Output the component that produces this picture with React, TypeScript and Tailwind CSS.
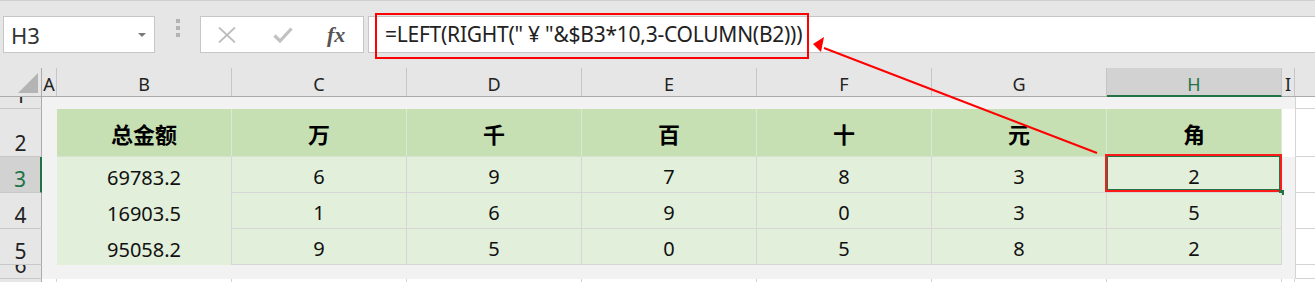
import React from "react";

const sans = "font-['Noto_Sans','Noto_Sans_CJK_SC',sans-serif]";
const cjk = "font-['Noto_Sans_CJK_SC','Noto_Sans',sans-serif]";

const letters = ["B", "C", "D", "E", "F", "G"];
const heads = ["总金额", "万", "千", "百", "十", "元", "角"];
const data = [
  ["69783.2", "6", "9", "7", "8", "3", "2"],
  ["16903.5", "1", "6", "9", "0", "3", "5"],
  ["95058.2", "9", "5", "0", "5", "8", "2"],
];

function RowHead({ n, sel }: { n: string; sel?: boolean }) {
  return (
    <div
      className={`w-[42px] shrink-0 flex items-end justify-center overflow-hidden pb-[2px] border-b border-[#c8c8c8] ${
        sel ? "bg-[#d2d2d2] text-[#217346] border-r-2 border-r-[#217346]" : "bg-[#e6e6e6] text-[#222] border-r border-r-[#ababab]"
      }`}
    >
      <span className="text-[21px] leading-none">{n}</span>
    </div>
  );
}

function Rest({ className = "" }: { className?: string }) {
  return <div className={`flex-1 bg-white border-l border-b border-[#d4d4d4] ${className}`} />;
}

function Toolbar() {
  return (
    <div className="h-[68px] shrink-0 flex items-start bg-[#e6e6e6] border-t border-[#d0d0d0]">
      <div className="mt-[15px] ml-[3px] w-[152px] h-[37px] bg-white border border-[#c6c6c6] flex items-center pl-[7px] pr-[8px]">
        <span className="text-[22px] leading-none text-[#333] flex-1">H3</span>
        <svg width="8" height="4" viewBox="0 0 8 4">
          <path d="M0 0H8L4 4Z" fill="#7a7a7a" />
        </svg>
      </div>
      <div className="w-[45px] h-[52px] flex flex-col items-center justify-center gap-[3px] pt-[1px]">
        <span className="w-[4px] h-[4px] bg-[#b3b3b3]" />
        <span className="w-[4px] h-[4px] bg-[#b3b3b3]" />
        <span className="w-[4px] h-[4px] bg-[#b3b3b3]" />
      </div>
      <div className="mt-[15px] w-[164px] h-[37px] bg-white border border-[#c6c6c6] flex items-center">
        <svg className="ml-[17px]" width="18" height="16" viewBox="0 0 18 16">
          <path d="M1 0.5L17 15.5M17 0.5L1 15.5" stroke="#bdbdbd" strokeWidth="1.8" />
        </svg>
        <svg className="ml-[37px]" width="20" height="16" viewBox="0 0 20 16">
          <path d="M1.5 8.5L7 14L18.5 1.5" stroke="#c2c2c2" strokeWidth="3.2" fill="none" />
        </svg>
        <span className="ml-[34px] font-['Liberation_Serif',serif] italic font-bold text-[22px] leading-none text-[#555]">
          fx
        </span>
      </div>
      <div className="relative mt-[15px] ml-[4px] flex-1 h-[37px] bg-white border-y border-l border-[#c6c6c6] flex items-center pl-[16px]">
        <span className="text-[21px] leading-none text-[#222] tracking-[-0.25px] whitespace-nowrap">
          =LEFT(RIGHT(" ¥ "&amp;$B3*10,3-COLUMN(B2)))
        </span>
        <div className="absolute left-[6px] top-[-4px] w-[434px] h-[46px] border-2 border-[#ff0000]" />
      </div>
    </div>
  );
}

function HeaderRow() {
  return (
    <div className="h-[29px] shrink-0 flex bg-[#e6e6e6] border-b border-[#ababab] text-[18px] leading-none text-[#222]">
      <div className="w-[42px] shrink-0 border-r border-[#ababab] flex items-end justify-end pr-[3px] pb-[3px]">
        <svg width="20" height="20" viewBox="0 0 20 20">
          <path d="M20 0V20H0Z" fill="#b4b4b4" />
        </svg>
      </div>
      <div className="w-[15px] shrink-0 border-r border-[#c6c6c6] flex items-end justify-center pb-[3px] overflow-hidden">
        A
      </div>
      {letters.map((l) => (
        <div key={l} className="w-[175px] shrink-0 border-r border-[#c6c6c6] flex items-end justify-center pb-[3px]">
          {l}
        </div>
      ))}
      <div className="w-[175px] shrink-0 bg-[#d2d2d2] border-r border-[#c6c6c6] border-b-2 border-b-[#217346] -mb-px flex items-end justify-center pb-[2px] text-[#217346]">
        H
      </div>
      <div className="w-[13px] shrink-0 border-r border-[#c6c6c6] flex items-end justify-center pb-[3px]">I</div>
      <div className="flex-1" />
    </div>
  );
}

export default function App() {
  return (
    <div className={`relative w-[1315px] h-[282px] overflow-hidden flex flex-col bg-white ${sans}`}>
      <Toolbar />
      <HeaderRow />

      {/* row 1 */}
      <div className="h-[12px] shrink-0 flex">
        <RowHead n="1" />
        <div className="w-[1253px] shrink-0 bg-[#f2f2f2]" />
        <Rest />
      </div>

      {/* row 2: labels */}
      <div className="h-[48px] shrink-0 flex">
        <RowHead n="2" />
        <div className="w-[15px] shrink-0 bg-[#f2f2f2]" />
        {heads.map((h) => (
          <div
            key={h}
            className={`w-[175px] shrink-0 bg-[#c6e0b4] border-r border-b border-r-[#dce9d2] border-b-[#d8dfd3] flex items-center justify-center ${cjk} font-bold text-[22px] leading-none text-black`}
          >
            {h}
          </div>
        ))}
        <div className="w-[13px] shrink-0 bg-white" />
        <Rest />
      </div>

      {/* rows 3-5 */}
      {data.map((r, i) => (
        <div key={i} className="h-[36px] shrink-0 flex">
          <RowHead n={String(i + 3)} sel={i === 0} />
          <div className="w-[15px] shrink-0 bg-[#f2f2f2]" />
          {r.map((v, j) => (
            <div
              key={j}
              className={`relative w-[175px] shrink-0 bg-[#e2efda] border-r border-[#d6d6d6] flex items-end justify-center pb-[5px] text-[20px] leading-none text-[#111] ${
                j === 0 ? "" : "border-b"
              }`}
            >
              {v}
              {i === 0 && j === 6 && (
                <>
                  <div className="absolute left-[-2px] top-[-3px] w-[177px] h-[38px] border-2 border-[#ff1a1a] shadow-[inset_0_0_0_1px_#217346]" />
                  <div className="absolute right-[-3px] bottom-[-3px] w-[5px] h-[5px] bg-[#217346]" />
                </>
              )}
            </div>
          ))}
          <div className="w-[13px] shrink-0 bg-[#f2f2f2]" />
          <Rest />
        </div>
      ))}

      {/* row 6 */}
      <div className="h-[14px] shrink-0 flex">
        <RowHead n="6" />
        <div className="w-[1253px] shrink-0 bg-[#f2f2f2]" />
        <Rest />
      </div>

      {/* bottom strip */}
      <div className="flex-1 flex">
        <div className="w-[42px] shrink-0 bg-[#e6e6e6] border-r border-[#ababab]" />
        <div className="w-[15px] shrink-0 border-r border-[#d4d4d4]" />
        {heads.map((h) => (
          <div key={h} className="w-[175px] shrink-0 border-r border-[#d4d4d4]" />
        ))}
        <div className="w-[13px] shrink-0 border-r border-[#d4d4d4]" />
        <div className="flex-1" />
      </div>

      {/* annotation arrow */}
      <svg className="absolute inset-0 pointer-events-none" width="1315" height="282" viewBox="0 0 1315 282">
        <line x1="1097" y1="153" x2="824" y2="48" stroke="#ff0000" strokeWidth="2" />
        <path d="M813 44L824 37L821 52Z" fill="#ff0000" />
      </svg>
    </div>
  );
}
